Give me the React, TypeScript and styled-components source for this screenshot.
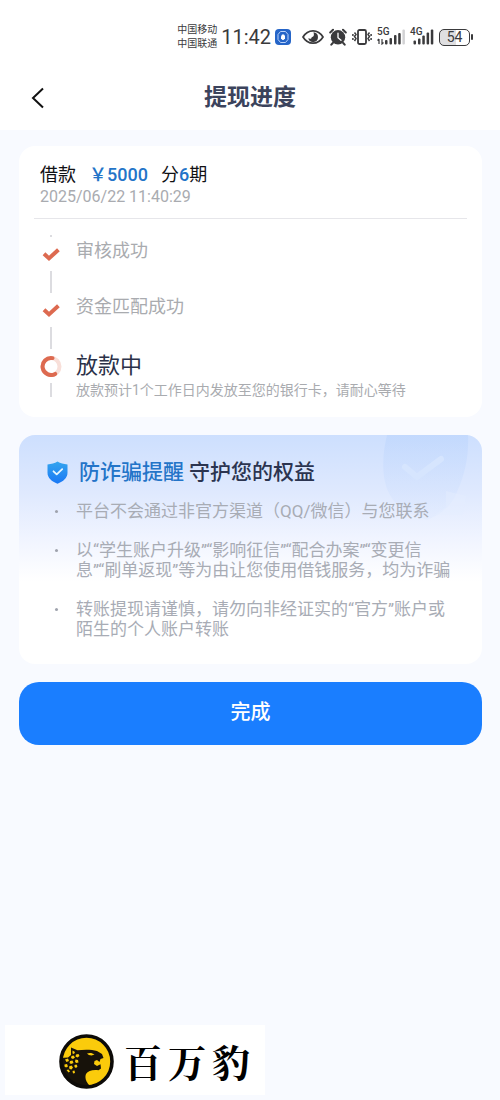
import React from 'react';
import styled, { createGlobalStyle } from 'styled-components';

const GlobalStyle = createGlobalStyle`
  *, *::before, *::after { box-sizing: border-box; }
  body {
    margin: 0;
    background: #f8faff;
    color: #111114;
    font-family: Roboto, "Noto Sans CJK SC", sans-serif;
  }
  h1, h2, p, ul, ol { margin: 0; padding: 0; }
  ul, ol { list-style: none; }
  svg { display: block; flex: none; }
`;

const Page = styled.div`
  display: flex;
  flex-direction: column;
  min-height: 100vh;
`;

const Top = styled.header`
  background: #fff;
`;

const StatusBar = styled.div`
  display: flex;
  align-items: center;
  justify-content: flex-end;
  gap: 4px;
  height: 64px;
  padding: 10px 27px 0 0;
  color: #3a3a3c;
`;

const Carriers = styled.div`
  font-size: 10px;
  line-height: 14px;
`;

const Clock = styled.time`
  font-size: 20px;
  line-height: 24px;
`;

const StatusIcons = styled.div`
  display: flex;
  align-items: center;
  gap: 5px;
  padding-left: 7px;
`;

const Signal = styled.div`
  position: relative;
  display: flex;
`;

const SignalLabel = styled.span`
  position: absolute;
  top: -2px;
  left: 0;
  font-size: 10px;
  line-height: 10px;
  font-weight: 500;
`;

const Battery = styled.div`
  display: flex;
  align-items: center;
  gap: 1px;

  &::after {
    content: '';
    width: 2px;
    height: 6px;
    border-radius: 1px;
    background: #3a3a3c;
  }
`;

const BatteryLevel = styled.span<{ $level: number }>`
  width: 31px;
  height: 17px;
  border: 1px solid #3a3a3c;
  border-radius: 5px;
  background: linear-gradient(90deg, #dfdfe1 ${p => p.$level}%, #fff ${p => p.$level}%);
  font-size: 14px;
  line-height: 15px;
  text-align: center;
`;

const NavBar = styled.div`
  display: grid;
  grid-template-columns: 60px 1fr 60px;
  align-items: center;
  height: 66px;
  padding-top: 2px;
`;

const BackButton = styled.button`
  display: flex;
  justify-content: center;
  padding: 8px 0 8px 15px;
  border: 0;
  background: none;
  color: #111;
  cursor: pointer;
`;

const Title = styled.h1`
  font-size: 23px;
  line-height: 32px;
  font-weight: 700;
  text-align: center;
  color: #3b435c;
`;

const Main = styled.main`
  display: flex;
  flex-direction: column;
  gap: 18px;
  padding: 16px 18px 18px 19px;
`;

const LoanCard = styled.section`
  padding: 17px 15px 20px;
  border-radius: 16px;
  background: #fff;
`;

const LoanHead = styled.div`
  padding: 0 6px 11px;
  border-bottom: 1px solid #e6e6ea;
`;

const LoanSummary = styled.h2`
  display: flex;
  gap: 13px;
  font-size: 18px;
  line-height: 24px;
  font-weight: 400;
`;

const Highlight = styled.strong`
  font-weight: 500;
  color: #2374c8;
`;

const LoanDate = styled.time`
  display: block;
  font-size: 16px;
  line-height: 20px;
  color: #a9abb0;
`;

const Steps = styled.ol`
  padding: 16px 6px 0;

  &::before {
    content: '';
    display: block;
    width: 2px;
    height: 2px;
    margin-left: 10px;
    background: #dcdce0;
  }
`;

const Step = styled.li`
  display: grid;
  grid-template-columns: 22px 1fr;
  column-gap: 14px;
`;

const Rail = styled.div<{ $last?: boolean }>`
  display: flex;
  flex-direction: column;
  align-items: center;
  gap: 6px;
  padding-top: 6px;

  &::after {
    content: '';
    width: 2px;
    height: ${p => (p.$last ? 14 : 22)}px;
    background: #dcdce0;
  }
`;

const StepName = styled.p<{ $current?: boolean }>`
  font-size: ${p => (p.$current ? 22 : 18)}px;
  line-height: ${p => (p.$current ? 34 : 28)}px;
  color: ${p => (p.$current ? '#2b3148' : '#a9abaf')};
`;

const StepNote = styled.p`
  font-size: 14px;
  line-height: 14px;
  color: #a9abaf;
`;

const SafetyCard = styled.section`
  position: relative;
  overflow: hidden;
  padding: 22px 18px 25px 28px;
  border-radius: 16px;
  background: linear-gradient(180deg, #cddffe 0%, #dfe9fe 25%, #f0f4ff 45%, #fff 64%);
`;

const Watermark = styled.svg`
  position: absolute;
  top: 0;
  right: 8px;
`;

const SafetyTitle = styled.h2`
  position: relative;
  display: flex;
  align-items: center;
  gap: 5px;
  font-size: 21px;
  line-height: 30px;
  font-weight: 500;
  color: #2b3450;

  svg { margin-right: 6px; }
`;

const Tips = styled.ul`
  position: relative;
  display: grid;
  gap: 19px;
  padding-top: 14px;
`;

const Tip = styled.li`
  display: grid;
  grid-template-columns: 21px 1fr;
  padding-left: 8px;
  font-size: 17px;
  line-height: 20px;
  color: #a8acb5;

  &::before {
    content: '';
    width: 3px;
    height: 3px;
    margin-top: 9px;
    border-radius: 50%;
    background: #9fa3ad;
  }
`;

const DoneButton = styled.button`
  padding: 15px 0 18px;
  border: 0;
  border-radius: 20px;
  background: #1a7eff;
  color: #fff;
  font: inherit;
  font-size: 20px;
  line-height: 30px;
  font-weight: 500;
  cursor: pointer;
`;

const Footer = styled.footer`
  margin-top: auto;
  padding: 0 5px 5px;
`;

const Brand = styled.div`
  display: flex;
  align-items: center;
  gap: 10px;
  max-width: 260px;
  height: 70px;
  padding: 2px 0 0 54px;
  background: #fff;
`;

const BrandName = styled.div`
  display: flex;
  gap: 6px;
  font-family: "Noto Serif CJK SC", "Noto Sans CJK SC", serif;
  font-size: 38px;
  line-height: 48px;
  font-weight: 700;
  color: #000;
`;

const AppBadge = () => (
  <svg width="16" height="16" viewBox="0 0 16 16">
    <rect width="16" height="16" rx="4" fill="#2565c8" />
    <path d="M5.500 2.500h5L13 5.500v5l-2.500 3h-5L3 10.500v-5Z" fill="none" stroke="#b9d2fa" />
    <path d="M6 7.500 7 5.500h2l1 1.500v2.500L8.500 11h-1L6 9.500z" fill="#fff" />
  </svg>
);

const EyeIcon = () => (
  <svg width="22" height="16" viewBox="0 0 22 16">
    <path d="M1 8C3.500 3.800 7 1.800 11 1.800S18.500 3.800 21 8c-2.500 4.200-6 6.200-10 6.200S3.500 12.200 1 8Z" fill="none" stroke="currentColor" strokeWidth="1.700" />
    <path d="M11.500 3.200a4.900 4.900 0 1 1-5.200 6c2 1 3.600.4 3.400-1.300C11.500 8 12.600 6.500 11.500 3.200Z" fill="currentColor" />
  </svg>
);

const AlarmIcon = () => (
  <svg width="18" height="18" viewBox="0 0 18 18">
    <circle cx="9" cy="9.300" r="7.200" fill="currentColor" />
    <path d="M1.200 4.500 4 1.800M16.800 4.500 14 1.800M3.800 15l-1.500 1.700M14.200 15l1.500 1.700" stroke="currentColor" strokeWidth="2" strokeLinecap="round" />
    <path d="M9 5.200v4.500l3 2.600" fill="none" stroke="#fff" strokeWidth="1.300" strokeLinecap="round" />
  </svg>
);

const VibrateIcon = () => (
  <svg width="20" height="16" viewBox="0 0 20 16">
    <rect x="6" y="1" width="8" height="14" rx="1.500" fill="none" stroke="currentColor" strokeWidth="1.800" />
    <path d="M2.500 3.500 4 5.500 2.500 7.500 4 9.500 2.500 12M17.500 3.500 16 5.500l1.500 2-1.500 2 1.500 2.500M.9 5v2M.9 9v2M19.100 5v2M19.100 9v2" fill="none" stroke="currentColor" strokeWidth="1.500" />
  </svg>
);

const Bars = ({ weak }: { weak?: boolean }) => (
  <svg width={weak ? 28 : 24} height="16" viewBox={weak ? '0 0 28 16' : '0 0 24 16'}>
    {weak && <path d="M2 10v5M.5 11.500 2 10M5 10v5l1.500-1.500" stroke="currentColor" strokeWidth="1.200" fill="none" />}
    <g fill="currentColor">
      {weak ? (
        <>
          <rect x="8" y="11" width="2.500" height="4.500" rx="1" />
          <rect x="12.500" y="9" width="2.500" height="6.500" rx="1" />
          <rect x="17" y="6" width="2.500" height="9.500" rx="1" />
          <rect x="21.200" y="4" width="2.500" height="11.500" rx="1" />
          <rect x="25.400" y="0.500" width="2.500" height="15" rx="1" fill="#d2d2d4" />
        </>
      ) : (
        <>
          <rect x="3.500" y="11.500" width="2.500" height="4" rx="1" />
          <rect x="8" y="9.500" width="2.500" height="6" rx="1" />
          <rect x="12.300" y="6.500" width="2.500" height="9" rx="1" />
          <rect x="16.600" y="3.500" width="2.500" height="12" rx="1" />
          <rect x="20.800" y="0.500" width="2.500" height="15" rx="1" />
        </>
      )}
    </g>
  </svg>
);

const CheckIcon = () => (
  <svg width="22" height="22" viewBox="0 0 22 22">
    <path d="M4 10.800 9 15.400 18.400 6.800" fill="none" stroke="#dd6a50" strokeWidth="4" />
  </svg>
);

const ProgressIcon = () => (
  <svg width="22" height="22" viewBox="0 0 22 22" fill="none" strokeWidth="4">
    <circle cx="11" cy="11.500" r="8.500" stroke="#f8dfd9" />
    <path d="M12.500 3.100A8.500 8.500 0 1 0 15.200 18.900" stroke="#dd6a50" strokeLinecap="round" />
  </svg>
);

const ShieldIcon = () => (
  <svg width="21" height="23" viewBox="0 0 21 23">
    <defs>
      <linearGradient id="shield" x1="0" y1="0" x2="0" y2="1">
        <stop offset="0" stopColor="#35a5ee" />
        <stop offset="1" stopColor="#1a78f5" />
      </linearGradient>
    </defs>
    <path d="M10.500.5c3 1.800 6 2.600 10 2.900v8.400c0 5.200-4.300 8.800-10 10.900C4.800 20.600.5 17 .5 11.800V3.400c4-.3 7-1.100 10-2.900Z" fill="url(#shield)" />
    <path d="m6.500 10.300 3.200 3.100 5.500-5.300" fill="none" stroke="#e6f6ff" strokeWidth="1.800" strokeLinecap="round" strokeLinejoin="round" />
  </svg>
);

const ShieldWatermark = () => (
  <Watermark width="92" height="90" viewBox="0 0 92 90" aria-hidden="true">
    <defs>
      <linearGradient id="mark" x1="0" y1="0" x2="0" y2="1">
        <stop offset="0" stopColor="#bcd5fd" stopOpacity=".6" />
        <stop offset="1" stopColor="#d3e2fe" stopOpacity=".2" />
      </linearGradient>
    </defs>
    <path d="M5 0C0 20-1 45 8 60c6 12 20 20 37 25 15-6 25-15 30-28C83 40 87 20 86 0Z" fill="url(#mark)" />
    <path d="m23 32 12 10 24-18" fill="none" stroke="#d6e5fe" strokeWidth="6" strokeLinecap="round" />
    <path d="m64 56 20 5-3 19H52l12-8Z" fill="#e5edfe" opacity=".45" />
  </Watermark>
);

const LeopardLogo = () => (
  <svg width="55" height="55" viewBox="0 0 55 55">
    <circle cx="27.500" cy="27.500" r="25.500" fill="#fbcb0b" />
    <path d="M1 24 9 23.500 12 21 12 13.500 18.500 16.300C25 15.500 33 15.500 38 17L43 20 44.500 24 41.500 25 40.500 28 38 26 35.500 27 35 30 38 32 41.500 30.300 42 34.500 39.500 36.200C34 35.500 29 36.500 27 40 25.500 44 27 48 31 52 16 56 1 46 1 24Z" fill="#17120a" />
    <path d="M28 19.500c3-1 5.500-.5 7.500 1l-3 1c-2 0-3.500-.7-4.500-2Z" fill="#fbcb0b" />
    <g fill="#fbcb0b">
      <path d="M13.500 16.500 16 18l-1 2-1.500-.5ZM17 20.500l2.500-.5 1 2-2 1.500-2-1ZM12.500 22l2-.5 1.500 2-2 1.500-2-1ZM6 25.500l3-1 1 2.500-2.500 1ZM11 27l2.500-.5 1 2.500-2.500 1-1.500-1ZM16.500 25.500l2.500.5.5 2.500-2.500.5-1-1.500ZM5.500 30.500l2.500-.5 1 2.500-2 1-1.500-1ZM10 32.500l2.500-1 1.500 2-1.500 2-2-.5ZM15.500 31l2-.5 1 2-1.500 1.500-1.500-1ZM7.500 36l2-.5 1.500 2-1.500 1ZM13.500 37l2-.5.5 2.500-2 .5Z" />
    </g>
    <circle cx="27.500" cy="27.500" r="25.500" fill="none" stroke="#0d0b08" strokeWidth="3.600" />
  </svg>
);

const tips = [
  ['平台不会通过非官方渠道（QQ/微信）与您联系'],
  ['以“学生账户升级”“影响征信”“配合办案”“变更信', '息”“刷单返现”等为由让您使用借钱服务，均为诈骗'],
  ['转账提现请谨慎，请勿向非经证实的“官方”账户或', '陌生的个人账户转账'],
];

export default function App() {
  return (
    <Page>
      <GlobalStyle />
      <Top>
        <StatusBar>
          <Carriers>
            <div>中国移动</div>
            <div>中国联通</div>
          </Carriers>
          <Clock>11:42</Clock>
          <AppBadge />
          <StatusIcons>
            <EyeIcon />
            <AlarmIcon />
            <VibrateIcon />
            <Signal>
              <SignalLabel>5G</SignalLabel>
              <Bars weak />
            </Signal>
            <Signal>
              <SignalLabel>4G</SignalLabel>
              <Bars />
            </Signal>
            <Battery>
              <BatteryLevel $level={54}>54</BatteryLevel>
            </Battery>
          </StatusIcons>
        </StatusBar>
        <NavBar>
          <BackButton type="button" aria-label="返回">
            <svg width="14" height="22" viewBox="0 0 14 22">
              <path d="M12 1.500 2 11l10 9.500" fill="none" stroke="currentColor" strokeWidth="2" />
            </svg>
          </BackButton>
          <Title>提现进度</Title>
        </NavBar>
      </Top>

      <Main>
        <LoanCard>
          <LoanHead>
            <LoanSummary>
              <span>借款</span>
              <Highlight>￥5000</Highlight>
              <span>分<Highlight>6</Highlight>期</span>
            </LoanSummary>
            <LoanDate dateTime="2025-06-22T11:40:29">2025/06/22 11:40:29</LoanDate>
          </LoanHead>
          <Steps>
            <Step>
              <Rail><CheckIcon /></Rail>
              <StepName>审核成功</StepName>
            </Step>
            <Step>
              <Rail><CheckIcon /></Rail>
              <StepName>资金匹配成功</StepName>
            </Step>
            <Step aria-current="step">
              <Rail $last><ProgressIcon /></Rail>
              <div>
                <StepName $current>放款中</StepName>
                <StepNote>放款预计1个工作日内发放至您的银行卡，请耐心等待</StepNote>
              </div>
            </Step>
          </Steps>
        </LoanCard>

        <SafetyCard>
          <ShieldWatermark />
          <SafetyTitle>
            <ShieldIcon />
            <Highlight>防诈骗提醒</Highlight>
            <span>守护您的权益</span>
          </SafetyTitle>
          <Tips>
            {tips.map(lines => (
              <Tip key={lines[0]}>
                <div>
                  {lines.map(line => <p key={line}>{line}</p>)}
                </div>
              </Tip>
            ))}
          </Tips>
        </SafetyCard>

        <DoneButton type="button">完成</DoneButton>
      </Main>

      <Footer>
        <Brand>
          <LeopardLogo />
          <BrandName>
            <span>百</span>
            <span>万</span>
            <span>豹</span>
          </BrandName>
        </Brand>
      </Footer>
    </Page>
  );
}
